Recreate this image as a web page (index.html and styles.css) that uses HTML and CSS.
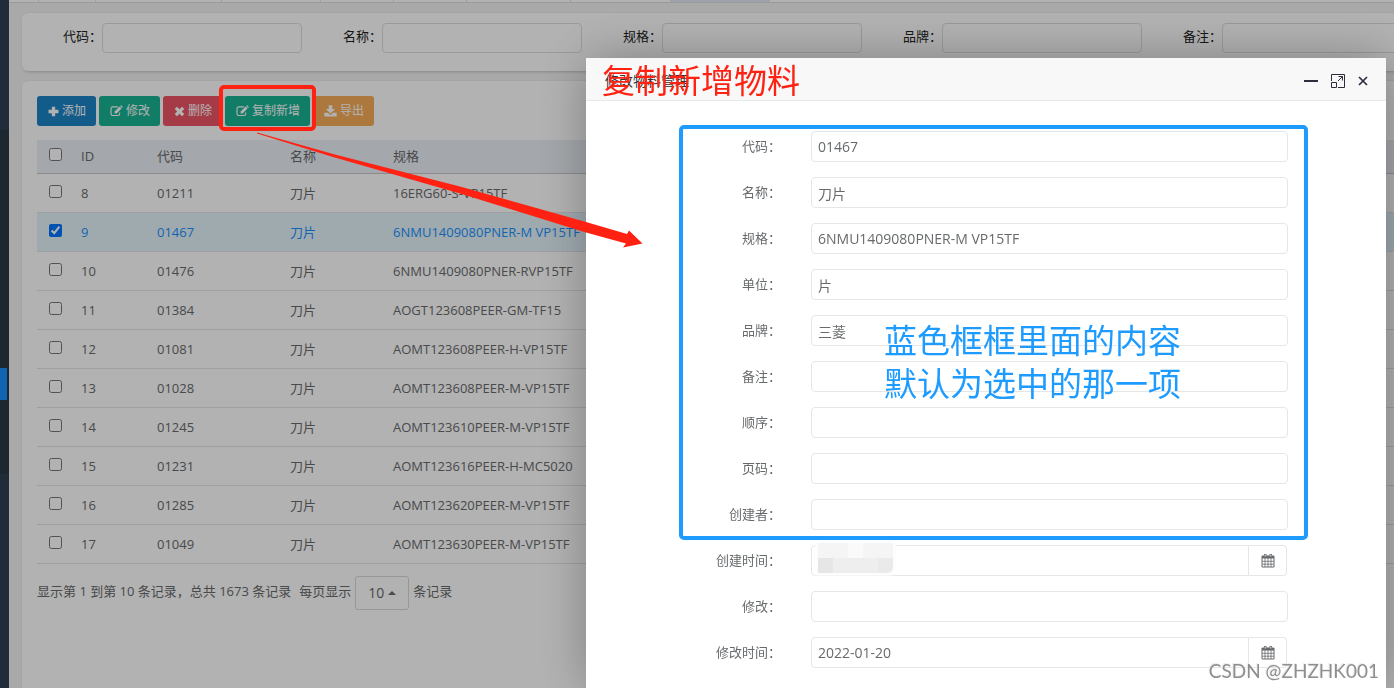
FILE: index.html
```html
<!DOCTYPE html>
<html lang="zh-CN">
<head>
<meta charset="utf-8">
<title>物料管理</title>
<link rel="stylesheet" href="styles.css">
</head>
<body>
<svg class="sprite" aria-hidden="true">
  <symbol id="i-plus" viewBox="0 0 12 12"><path d="M4.200.800h3.600v3.400h3.600v3.600H7.800v3.400H4.200V7.800H.600V4.200h3.600z"/></symbol>
  <symbol id="i-times" viewBox="0 0 12 12"><path d="M3.200.800 6 3.500 8.800.800 11.200 3.200 8.500 6 11.200 8.800 8.800 11.200 6 8.500 3.200 11.200.800 8.800 3.500 6 .800 3.200z"/></symbol>
  <symbol id="i-edit" viewBox="0 0 14 12"><path d="M8.500 1.600H3A1.900 1.900 0 0 0 1.100 3.500V9A1.900 1.900 0 0 0 3 10.900h5.500A1.900 1.900 0 0 0 10.400 9V7.500" fill="none" stroke="currentColor" stroke-width="1.200"/><path d="M5 6.500 10.300 1.200 12.400 3.300 7.100 8.600H5z"/><path d="M10.900.700 11.400.200q.500-.400 1 0l1.100 1.100q.400.500 0 1L13 2.800z"/></symbol>
  <symbol id="i-down" viewBox="0 0 13 12"><path d="M4.700.300h3.600V4h2.900L6.500 8.400 1.800 4h2.900zM.300 7.800h3.600l1.700 1.600q.900.700 1.800 0l1.700-1.600h3.600v3.600H.300z"/></symbol>
  <symbol id="i-cal" viewBox="0 0 14 15"><path d="M1 3h12v11H1z" fill="none" stroke="currentColor"/><path d="M1 3h12v2.500H1zM3 1h2.500v3H3zM8.500 1H11v3H8.500z"/><path d="M1 8.300h12M1 11.200h12M4 5v9M7 5v9M10 5v9" stroke="currentColor" stroke-width=".8"/><path d="M4.200 1.600v2M9.800 1.600v2" stroke="#fff" stroke-width=".8"/></symbol>
</svg>
<div class="app">
  <aside class="sidebar"><div class="submenu"><div class="current"></div></div></aside>
  <main class="main">
    <div class="tabs"><i></i><i></i><i></i><i></i><i></i><i></i><i></i><i></i><i class="active"></i></div>
    <form class="card search">
      <label>代码：<input type="text"></label>
      <label>名称：<input type="text"></label>
      <label>规格：<input type="text"></label>
      <label>品牌：<input type="text"></label>
      <label>备注：<input type="text"></label>
    </form>
    <section class="card list">
      <div class="toolbar">
        <button type="button" class="btn blue"><svg width="11" height="11"><use href="#i-plus"/></svg>添加</button>
        <button type="button" class="btn green"><svg width="13" height="12"><use href="#i-edit"/></svg>修改</button>
        <button type="button" class="btn red"><svg width="11" height="11"><use href="#i-times"/></svg>删除</button>
        <button type="button" class="btn green"><svg width="13" height="12"><use href="#i-edit"/></svg>复制新增</button>
        <button type="button" class="btn orange"><svg width="13" height="12"><use href="#i-down"/></svg>导出</button>
      </div>
      <table class="grid">
        <colgroup><col class="c-check"><col class="c-id"><col class="c-code"><col class="c-name"><col></colgroup>
        <thead><tr><th><input type="checkbox" aria-label="全选"></th><th>ID</th><th>代码</th><th>名称</th><th>规格</th></tr></thead>
        <tbody>
          <tr><td><input type="checkbox" aria-label="8"></td><td>8</td><td>01211</td><td>刀片</td><td>16ERG60-S-VP15TF</td></tr>
          <tr class="selected"><td><input type="checkbox" aria-label="9" checked></td><td>9</td><td>01467</td><td>刀片</td><td>6NMU1409080PNER-M VP15TF</td></tr>
          <tr><td><input type="checkbox" aria-label="10"></td><td>10</td><td>01476</td><td>刀片</td><td>6NMU1409080PNER-RVP15TF</td></tr>
          <tr><td><input type="checkbox" aria-label="11"></td><td>11</td><td>01384</td><td>刀片</td><td>AOGT123608PEER-GM-TF15</td></tr>
          <tr><td><input type="checkbox" aria-label="12"></td><td>12</td><td>01081</td><td>刀片</td><td>AOMT123608PEER-H-VP15TF</td></tr>
          <tr><td><input type="checkbox" aria-label="13"></td><td>13</td><td>01028</td><td>刀片</td><td>AOMT123608PEER-M-VP15TF</td></tr>
          <tr><td><input type="checkbox" aria-label="14"></td><td>14</td><td>01245</td><td>刀片</td><td>AOMT123610PEER-M-VP15TF</td></tr>
          <tr><td><input type="checkbox" aria-label="15"></td><td>15</td><td>01231</td><td>刀片</td><td>AOMT123616PEER-H-MC5020</td></tr>
          <tr><td><input type="checkbox" aria-label="16"></td><td>16</td><td>01285</td><td>刀片</td><td>AOMT123620PEER-M-VP15TF</td></tr>
          <tr><td><input type="checkbox" aria-label="17"></td><td>17</td><td>01049</td><td>刀片</td><td>AOMT123630PEER-M-VP15TF</td></tr>
        </tbody>
      </table>
      <div class="pager">
        <span class="total">显示第 1 到第 10 条记录，总共 1673 条记录</span>
        <span>每页显示</span>
        <button type="button" class="size">10<i class="caret"></i></button>
        <span>条记录</span>
      </div>
    </section>
  </main>
</div>
<div class="shade"></div>

<div class="dialog" role="dialog" aria-labelledby="dlg-title">
  <header class="dialog-head">
    <h1 id="dlg-title">修改物料管理</h1>
    <button type="button" aria-label="最小化"><svg width="14" height="14"><path d="M0 7h14" stroke="#2e2d3c" stroke-width="2"/></svg></button>
    <button type="button" aria-label="最大化"><svg width="14" height="14"><path d="M.5 7V.5h13v13H7M.5 8.500h5v5h-5zM7 7l4.500-4.500M7.500 2.500h4v4" fill="none" stroke="#2e2d3c"/></svg></button>
    <button type="button" aria-label="关闭"><svg width="10" height="10"><path d="M1 1l8 8M9 1l-8 8" stroke="#2e2d3c" stroke-width="1.700"/></svg></button>
  </header>
  <form class="fields">
    <label for="f1">代码：</label><input id="f1" type="text" value="01467">
    <label for="f2">名称：</label><input id="f2" type="text" value="刀片">
    <label for="f3">规格：</label><input id="f3" type="text" value="6NMU1409080PNER-M VP15TF">
    <label for="f4">单位：</label><input id="f4" type="text" value="片">
    <label for="f5">品牌：</label><input id="f5" type="text" value="三菱">
    <label for="f6">备注：</label><input id="f6" type="text">
    <label for="f7">顺序：</label><input id="f7" type="text">
    <label for="f8">页码：</label><input id="f8" type="text">
    <label for="f9">创建者：</label><input id="f9" type="text">
    <label for="f10">创建时间：</label>
    <div class="date"><input id="f10" type="text"><button type="button" aria-label="选择日期"><svg width="14" height="15"><use href="#i-cal"/></svg></button>
      <div class="mosaic"><i></i><i></i><i></i><i></i><i></i><i></i><i></i><i></i><i></i><i></i></div></div>
    <label for="f11">修改：</label><input id="f11" type="text">
    <label for="f12">修改时间：</label>
    <div class="date"><input id="f12" type="text" value="2022-01-20"><button type="button" aria-label="选择日期"><svg width="14" height="15"><use href="#i-cal"/></svg></button></div>
  </form>
  <div class="mark-blue"></div>
  <p class="note note-red">复制新增物料</p>
  <p class="note note-blue">蓝色框框里面的内容<br>默认为选中的那一项</p>
</div>
<div class="mark-red"></div>
<svg class="arrow" width="400" height="130" viewBox="250 125 400 130" aria-hidden="true"><path d="M257 132.500 333 154 460 186.500 586 222 627 234 629 230.500 642.500 243.500 623 247.500 626 243.500 586 232.500 460 193.500 333 157 257 133.500z" fill="#ff2111"/></svg>
<div class="watermark">CSDN @ZHZHK001</div>
</body>
</html>
```
FILE: styles.css
```css
* { box-sizing: border-box; }
body {
  margin: 0;
  height: 100vh;
  overflow: hidden;
  background: #f2f2f2;
  color: #676a6c;
  font: 13px/18px "Open Sans", "Noto Sans CJK SC", sans-serif;
}
button, input { font: inherit; color: inherit; }
svg { fill: currentColor; flex: none; }
.sprite { position: absolute; width: 0; height: 0; }

.app { display: flex; height: 100vh; }
.sidebar { flex: 0 0 9px; background: #2f4050; padding-top: 130px; }
.submenu { height: 344px; padding-top: 238px; background: #293846; }
.current { width: 7px; height: 32px; background: #1890ff; }
.main { flex: 1; min-width: 0; display: flex; flex-direction: column; gap: 10px; overflow: hidden; }

.tabs { display: flex; height: 3px; background: #fff; border-bottom: 1px solid #dedede; }
.tabs i { width: 73px; border-right: 1px solid #e4e4e4; }
.tabs i:first-child { width: 30px; }
.tabs i:nth-child(2) { width: 57px; }
.tabs i:nth-child(3) { width: 126px; }
.tabs i:nth-child(4) { width: 99px; }
.tabs i:nth-child(7) { width: 104px; }
.tabs i:nth-child(8) { width: 99px; border: 0; }
.tabs .active { width: 100px; border: 0; background: #e4e8f5; }

.card { margin: 0 -8px 0 13px; background: #fff; border-radius: 6px; box-shadow: 1px 1px 3px rgba(0, 0, 0, .2); }
.search { display: flex; gap: 41px; padding: 10px 0 18px 41px; overflow: hidden; color: #222; }
.search label { flex: none; display: flex; line-height: 27px; }
.search input { width: 200px; height: 30px; padding: 0 6px; border: 1px solid #ddd; border-radius: 4px; background: #fff; }
.list { flex: 1; padding: 15px 8px 0 15px; border-radius: 6px 0 0 0; }

.toolbar { display: flex; gap: 3px; margin-bottom: 14px; }
.btn { display: flex; align-items: center; gap: 3px; height: 30px; padding: 0 10px 0 11px; border: 0; border-radius: 3px; color: #fff; font-size: 12px; white-space: nowrap; }
.blue { background: #1c84c6; }
.green { background: #1ab394; }
.red { background: #ed5565; }
.orange { background: #f8ac59; }

.grid { width: 100%; table-layout: fixed; border-collapse: collapse; }
.c-check { width: 36px; }
.c-id { width: 76px; }
.c-code { width: 133px; }
.c-name { width: 103px; }
.grid th, .grid td { height: 39px; padding: 0 8px; border-bottom: 1px solid #e4e4e4; text-align: left; font-weight: 400; }
.grid th { height: 33px; background: #ebeff5; border-color: #c8c8cc; }
.grid th:first-child, .grid td:first-child { padding: 0 0 3px; text-align: center; }
.grid input { display: block; width: 13px; height: 13px; margin: 0 auto; }
.selected { background: #e4f4fa; color: #1890ff; }

.pager { display: flex; gap: 4px; padding-top: 12px; line-height: 30px; }
.total { margin-right: 4px; }
.size { display: flex; align-items: center; gap: 4px; height: 34px; padding: 0 12px; border: 1px solid #d9d9d9; border-radius: 3px; background: #fff; font-size: 14px; }
.caret { border: 4px solid transparent; border-top: 0; border-bottom-color: currentColor; }

.shade { position: fixed; inset: 0; background: rgba(0, 0, 0, .3); }

.dialog { position: fixed; top: 58px; right: 8px; bottom: 0; width: 800px; background: #fff; border-radius: 2px 2px 0 0; box-shadow: 1px 1px 50px rgba(0, 0, 0, .3); }
.dialog-head { display: flex; align-items: center; gap: 13px; height: 43px; padding: 3px 18px 0 19px; background: #f8f8f8; border-bottom: 1px solid #e7eaec; }
.dialog-head h1 { flex: 1; margin: 0; font-size: 14px; font-weight: 400; line-height: 18px; color: #333; }
.dialog-head button { display: flex; padding: 0; border: 0; background: none; }
.fields { display: grid; grid-template-columns: 195px 1fr; column-gap: 30px; row-gap: 15px; padding: 30px 98px 0 0; }
.fields label { padding-top: 6px; text-align: right; }
.fields input { width: 100%; height: 31px; padding: 0 6px; border: 1px solid #e5e6e7; border-radius: 4px; background: #fff; font-size: 14px; }
.date { position: relative; display: flex; padding-right: 1px; }
.date input { border-radius: 4px 0 0 4px; }
.date button { display: flex; flex: 0 0 38px; align-items: center; justify-content: center; padding: 0; border: 1px solid #e5e6e7; border-left: 0; border-radius: 0 4px 4px 0; background: #fff; }
.mosaic { position: absolute; left: 7px; top: -2px; display: grid; grid-template-columns: repeat(5, 15px); grid-auto-rows: 15px; border-radius: 0 0 5px 0; overflow: hidden; box-shadow: 0 0 3px 3px #fdfdfd; }
.mosaic i { background: #f5f5f5; }
.mosaic i:nth-child(3) { background: #fafafa; }
.mosaic i:nth-child(n+6) { background: #eee; }
.mosaic i:nth-child(6) { background: #e6e6e6; }
.mosaic i:nth-child(10) { background: #eaeaea; }

/* Annotations drawn over the page */
.mark-blue { position: absolute; left: 93px; top: 67px; width: 629px; height: 415px; border: 4px solid #1e9bff; border-radius: 5px; pointer-events: none; }
.note { position: absolute; margin: 0; font-size: 33px; line-height: 43px; white-space: nowrap; }
.note-red { left: 16px; top: 1px; color: #ff2111; }
.note-blue { left: 298px; top: 261px; color: #1e9bff; }
.mark-red { position: absolute; left: 219px; top: 85px; width: 97px; height: 46px; border: 4px solid #ff2111; border-radius: 5px; pointer-events: none; }
.arrow { position: absolute; left: 250px; top: 125px; pointer-events: none; }
.watermark { position: fixed; right: 15px; bottom: 5px; font: 19px/24px Lato, sans-serif; color: #8f8f8f; text-shadow: -1px -1px 0 #eee; }
```
